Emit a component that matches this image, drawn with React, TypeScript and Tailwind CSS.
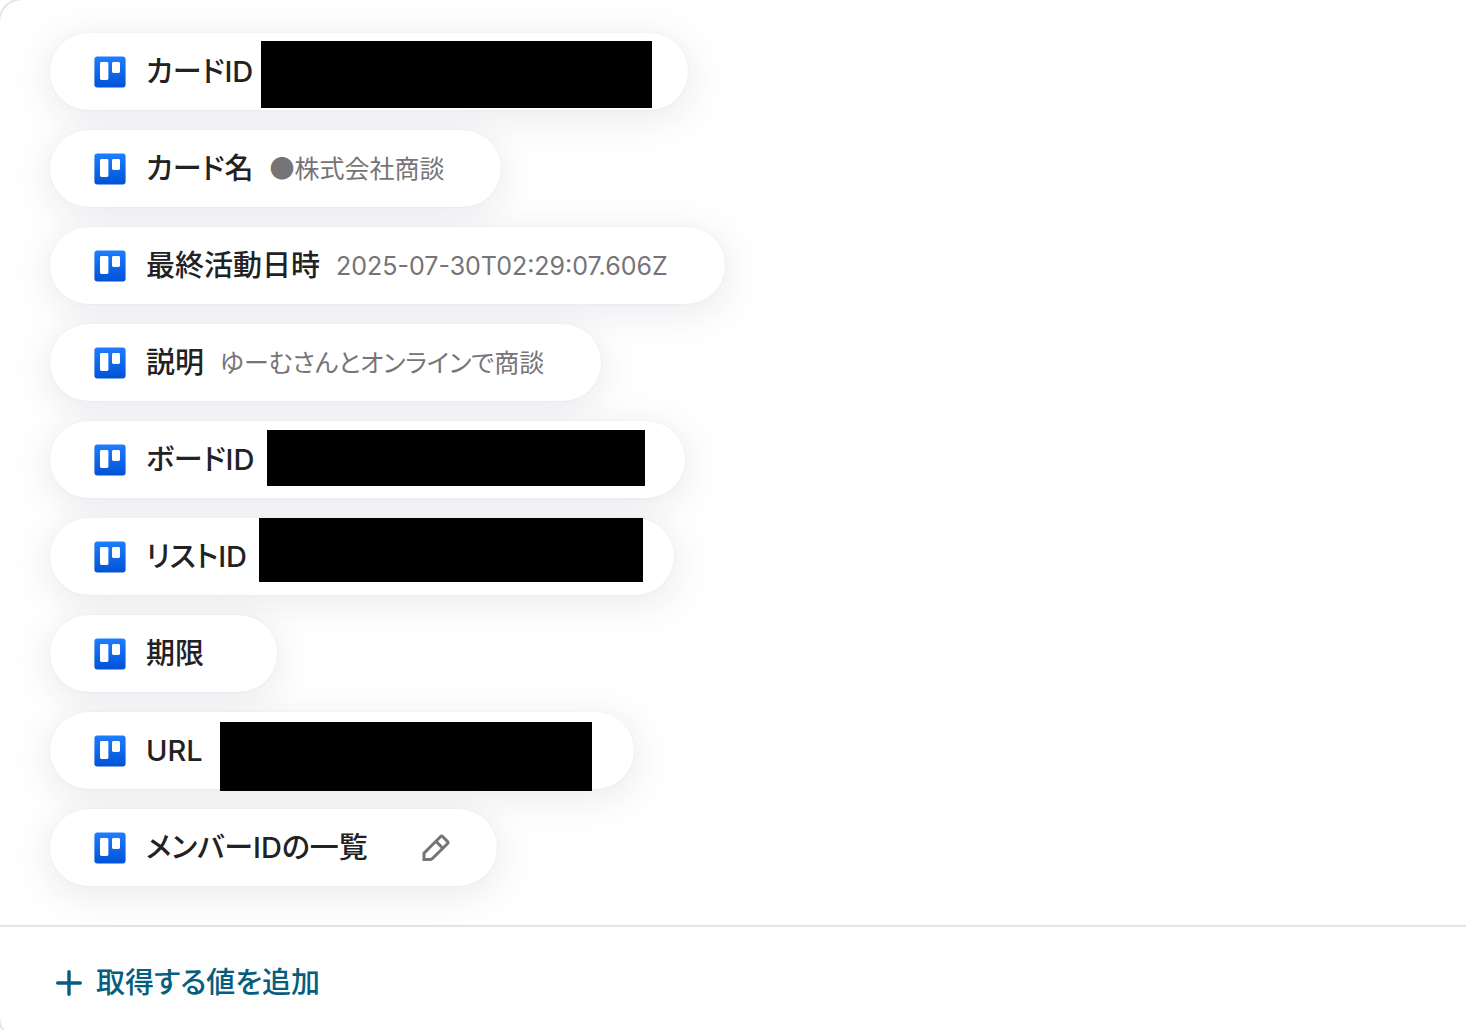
import React from "react";

interface OutputField {
  label: string;
  value?: string;
  // full-width bullet in front of the value
  bullet?: boolean;
  // reserved width of a hidden value, and the bar that covers it
  hiddenWidth?: string;
  maskClass?: string;
  editable?: boolean;
}

const fields: OutputField[] = [
  {
    label: "カードID",
    hiddenWidth: "w-[362px]",
    maskClass: "left-[211px] top-2 h-[67px] w-[391px]",
  },
  { label: "カード名", value: "株式会社商談", bullet: true },
  { label: "最終活動日時", value: "2025-07-30T02:29:07.606Z" },
  { label: "説明", value: "ゆーむさんとオンラインで商談" },
  {
    label: "ボードID",
    hiddenWidth: "w-[358px]",
    maskClass: "left-[217px] top-[9px] h-14 w-[378px]",
  },
  {
    label: "リストID",
    hiddenWidth: "w-[354px]",
    maskClass: "left-[209px] top-0 h-16 w-[384px]",
  },
  { label: "期限", value: "" },
  {
    label: "URL",
    hiddenWidth: "w-[358px]",
    maskClass: "left-[170px] top-2.5 h-[69px] w-[372px]",
  },
  { label: "メンバーIDの一覧", editable: true },
];

function TrelloIcon() {
  return (
    <svg
      className="size-8 shrink-0"
      viewBox="0 0 32 32"
      fill="none"
      aria-hidden="true"
    >
      <defs>
        <linearGradient id="trello" x1="0" y1="0" x2="0" y2="1">
          <stop offset="0" stopColor="#1f7dff" />
          <stop offset="1" stopColor="#0052d6" />
        </linearGradient>
      </defs>
      <rect x="0.4" y="0.4" width="31.2" height="31.2" rx="3" fill="url(#trello)" />
      <rect x="6" y="6" width="8.4" height="18" rx="1.4" fill="#fff" />
      <rect x="18" y="6" width="8" height="11" rx="1.4" fill="#fff" />
    </svg>
  );
}

function PencilIcon() {
  return (
    <svg
      className="size-7"
      viewBox="0 0 28 28"
      fill="none"
      stroke="#767477"
      strokeWidth="3"
      aria-hidden="true"
    >
      <path d="M2 25.6V19.2L18.4 2.8a1.7 1.7 0 0 1 2.4 0L25.4 7.4a1.7 1.7 0 0 1 0 2.4L10.4 24.6L8.4 25.6Z" />
      <path d="M14 7.4L20.8 14.2" />
    </svg>
  );
}

function FieldPill({ field }: { field: OutputField }) {
  return (
    <li className="relative flex h-[77px] items-center rounded-full bg-white pl-11 pr-[57px] shadow-[0_0_3px_rgba(60,35,75,0.05),0_7px_34px_rgba(60,35,75,0.1)]">
      <TrelloIcon />
      <span className="ml-5 text-[29px] leading-10 font-medium text-[#222124]">
        {field.label}
      </span>
      {field.value !== undefined ? (
        <span className="ml-4 text-[25px] leading-9 text-[#767477]">
          {field.bullet ? (
            <span className="font-['Noto_Sans_CJK_JP',sans-serif] leading-none">
              ●
            </span>
          ) : null}
          {field.value}
        </span>
      ) : null}
      {field.maskClass ? (
        <>
          <span className={`ml-4 ${field.hiddenWidth}`} />
          <span className={`absolute bg-black ${field.maskClass}`} />
        </>
      ) : null}
      {field.editable ? (
        <button type="button" aria-label="編集" className="-mr-2.5 ml-[54px]">
          <PencilIcon />
        </button>
      ) : null}
    </li>
  );
}

export default function App() {
  return (
    <div className="h-screen overflow-hidden bg-white font-['Inter','Noto_Sans_CJK_JP',sans-serif] [font-feature-settings:'palt']">
      <div className="-mt-0.5 -ml-0.5 rounded-l-[24px] border-2 border-r-0 border-[#e4e3e6] bg-[#fefefe]">
        <ul className="flex flex-col items-start gap-5 px-[50px] pt-[33px] pb-[39px]">
          {fields.map((field) => (
            <FieldPill key={field.label} field={field} />
          ))}
        </ul>
        <div className="flex h-[114px] items-center border-t-2 border-[#e4e3e6] px-14">
          <button
            type="button"
            className="flex items-center gap-3.5 text-[29px] leading-10 font-medium text-[#065e7f]"
          >
            <svg
              className="size-[26px]"
              viewBox="0 0 26 26"
              stroke="currentColor"
              strokeWidth="3.4"
              strokeLinecap="round"
              aria-hidden="true"
            >
              <path d="M13 1.7V24.3M1.7 13H24.3" />
            </svg>
            取得する値を追加
          </button>
        </div>
      </div>
    </div>
  );
}
